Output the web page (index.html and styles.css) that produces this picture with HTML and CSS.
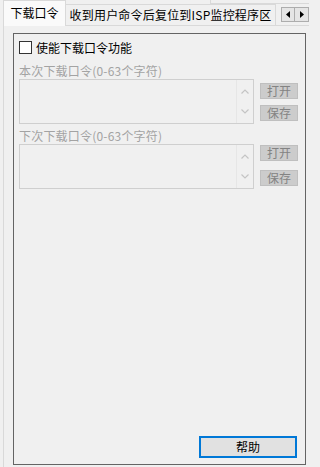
FILE: index.html
```html
<!DOCTYPE html>
<html lang="zh-CN">
<head>
<meta charset="utf-8">
<title>下载口令</title>
<link rel="stylesheet" href="styles.css">
</head>
<body>
<div class="window">
  <div class="strip">
    <div class="tab sel">下载口令</div>
    <div class="tab">收到用户命令后复位到ISP监控程序区</div>
    <div class="spin">
      <span class="sbtn"><svg width="4" height="7" viewBox="0 0 4 7"><path d="M4 0V7L0 3.5Z" fill="#000"/></svg></span>
      <span class="sbtn"><svg width="4" height="7" viewBox="0 0 4 7"><path d="M0 0V7L4 3.5Z" fill="#000"/></svg></span>
    </div>
    <div class="edge"></div>
  </div>
  <div class="panel">
    <div class="group">
      <div class="check"><span class="box"></span><span>使能下载口令功能</span></div>
      <div class="cap">本次下载口令(0-63个字符)</div>
      <div class="row">
        <div class="memo">
          <div class="memo-text"></div>
          <div class="memo-bar">
            <svg width="8" height="5" viewBox="0 0 8 5"><path d="M0.5 4.5L4 1L7.5 4.5" fill="none" stroke="#c4c4c4" stroke-width="1.2"/></svg>
            <svg width="8" height="5" viewBox="0 0 8 5"><path d="M0.5 0.5L4 4L7.5 0.5" fill="none" stroke="#c4c4c4" stroke-width="1.2"/></svg>
          </div>
        </div>
        <div class="btns first">
          <span class="btn">打开</span>
          <span class="btn">保存</span>
        </div>
      </div>
      <div class="cap cap2">下次下载口令(0-63个字符)</div>
      <div class="row">
        <div class="memo">
          <div class="memo-text"></div>
          <div class="memo-bar">
            <svg width="8" height="5" viewBox="0 0 8 5"><path d="M0.5 4.5L4 1L7.5 4.5" fill="none" stroke="#c4c4c4" stroke-width="1.2"/></svg>
            <svg width="8" height="5" viewBox="0 0 8 5"><path d="M0.5 0.5L4 4L7.5 0.5" fill="none" stroke="#c4c4c4" stroke-width="1.2"/></svg>
          </div>
        </div>
        <div class="btns second">
          <span class="btn">打开</span>
          <span class="btn">保存</span>
        </div>
      </div>
      <div class="foot"><span class="help">帮助</span></div>
    </div>
  </div>
</div>
</body>
</html>
```
FILE: styles.css
```css
html, body {
  margin: 0;
  padding: 0;
}
body {
  width: 309px;
  height: 467px;
  overflow: hidden;
  background: #f0f0f0;
  font-family: "Noto Sans CJK SC", "Noto Sans", sans-serif;
  font-size: 12px;
  color: #000;
}
.window {
  width: 309px;
  height: 467px;
  display: flex;
  flex-direction: column;
}
.strip {
  height: 25px;
  display: flex;
  align-items: flex-end;
  padding-left: 3px;
  position: relative;
  z-index: 1;
  flex: none;
}
.tab {
  box-sizing: border-box;
  height: 21px;
  width: 210px;
  border: 1px solid #d9d9d9;
  border-left: none;
  border-bottom: none;
  background: #f0f0f0;
  display: flex;
  align-items: center;
  justify-content: center;
  white-space: nowrap;
  line-height: 14px;
  letter-spacing: 0.2px;
  flex: none;
}
.tab.sel {
  width: 63px;
  height: 26px;
  margin-bottom: -1px;
  border-left: 1px solid #d9d9d9;
  background: #fafafa;
  padding-bottom: 1px;
  letter-spacing: 0;
}
.spin {
  align-self: flex-start;
  margin-top: 7px;
  margin-left: 5px;
  display: flex;
  flex: none;
}
.sbtn {
  box-sizing: border-box;
  width: 14px;
  height: 15px;
  border: 1px solid #adadad;
  background: #e5e5e5;
  display: flex;
  align-items: center;
  justify-content: center;
}
.sbtn + .sbtn {
  margin-left: -1px;
  width: 15px;
}
.edge {
  position: absolute;
  left: 210px;
  top: 0;
  width: 110px;
  height: 4px;
  border-left: 1px solid #d9d9d9;
  border-bottom: 1px solid #d9d9d9;
  box-sizing: border-box;
}
.panel {
  flex: 1;
  margin-left: 3px;
  border-left: 1px solid #d9d9d9;
  border-top: 1px solid #d9d9d9;
  padding: 7px 0 0 9px;
  box-sizing: border-box;
  min-height: 0;
}
.group {
  box-sizing: border-box;
  width: 293px;
  height: 432px;
  border: 1px solid #646464;
  display: flex;
  flex-direction: column;
  padding: 7px 0 0 5px;
}
.check {
  height: 13px;
  display: flex;
  align-items: center;
  line-height: 13px;
}
.box {
  box-sizing: border-box;
  width: 13px;
  height: 13px;
  border: 1px solid #333;
  background: #fff;
  margin-right: 4px;
  flex: none;
}
.cap {
  margin-top: 9px;
  height: 16px;
  line-height: 16px;
  color: #a3a3a3;
  white-space: nowrap;
  letter-spacing: 0.2px;
}
.cap2 {
  margin-top: 4px;
}
.row {
  height: 45px;
  display: flex;
}
.memo {
  box-sizing: border-box;
  width: 235px;
  height: 45px;
  border: 1px solid #cfcfcf;
  background: #f0f0f0;
  display: flex;
}
.memo-text {
  flex: 1;
}
.memo-bar {
  width: 17px;
  border-left: 1px solid #e6e6e6;
  display: flex;
  flex-direction: column;
  align-items: center;
  justify-content: space-between;
  padding: 9px 0 9px;
  box-sizing: border-box;
}
.btns {
  margin-left: 6px;
  width: 38px;
  display: flex;
  flex-direction: column;
}
.btns.first {
  padding-top: 4px;
  gap: 6px;
}
.btns.second {
  padding-top: 1px;
  gap: 9px;
}
.btn {
  box-sizing: border-box;
  height: 16px;
  background: #cccccc;
  border: 1px solid #bfbfbf;
  color: #838383;
  text-align: center;
  line-height: 14px;
}
.foot {
  margin-top: auto;
  margin-bottom: 6px;
  display: flex;
  justify-content: flex-end;
  padding-right: 8px;
}
.help {
  box-sizing: border-box;
  width: 98px;
  height: 22px;
  border: 2px solid #0078d7;
  background: #e1e1e1;
  text-align: center;
  line-height: 18px;
}
```
